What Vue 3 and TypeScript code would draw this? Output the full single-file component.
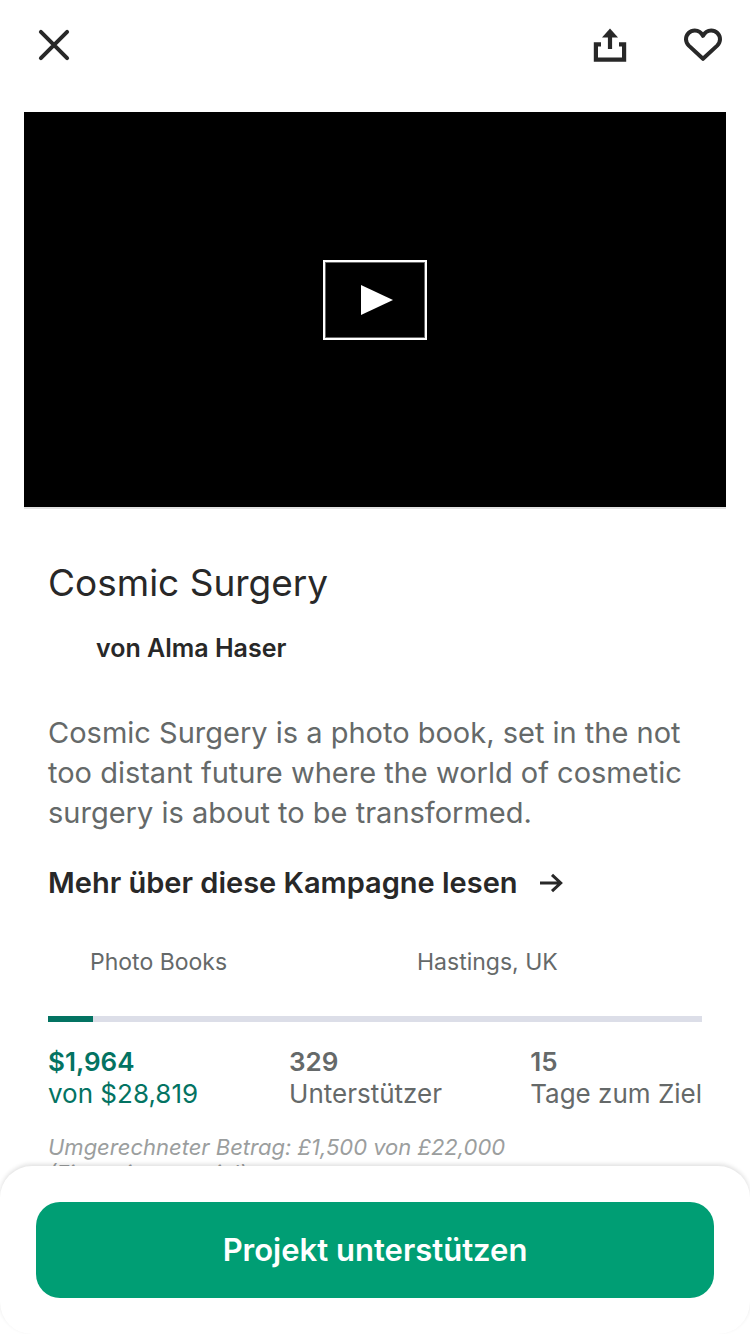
<script setup lang="ts">
interface Stat {
  value: string
  label: string
  highlight?: boolean
}

const title = 'Cosmic Surgery'
const fundedPercent = (1964 / 28819) * 100
const stats: Stat[] = [
  { value: '$1,964', label: 'von $28,819', highlight: true },
  { value: '329', label: 'Unterstützer' },
  { value: '15', label: 'Tage zum Ziel' },
]
</script>

<template>
  <div class="screen">
    <header class="toolbar">
      <button class="icon-button" type="button" aria-label="Schließen">
        <svg width="40" height="40" viewBox="0 0 40 40">
          <path d="M6.9 6.9 33.1 33.1M33.1 6.9 6.9 33.1" fill="none" stroke="currentColor" stroke-width="4" stroke-linecap="round" />
        </svg>
      </button>
      <div class="actions">
        <button class="icon-button" type="button" aria-label="Teilen">
          <svg width="40" height="40" viewBox="0 0 40 40">
            <path d="M11 19.3H5.9V34.6H34.1V19.3H29" fill="none" stroke="currentColor" stroke-width="4.2" />
            <path d="M20 24V10" fill="none" stroke="currentColor" stroke-width="4.2" />
            <path d="M20 3.5 28 12.4H12Z" fill="currentColor" />
          </svg>
        </button>
        <button class="icon-button" type="button" aria-label="Merken">
          <svg width="40" height="40" viewBox="0 0 40 40">
            <path d="M20 33.8 5.8 20.6C4 18.8 3 16.6 3 14.3 3 9.3 7 5.4 11.8 5.4 15.2 5.4 18.2 7.2 20 10.8 21.8 7.2 24.8 5.4 28.2 5.4 33 5.4 37 9.3 37 14.3 37 16.6 36 18.8 34.2 20.6Z" fill="none" stroke="currentColor" stroke-width="4" stroke-linejoin="round" />
          </svg>
        </button>
      </div>
    </header>

    <main class="content">
      <section class="video">
        <button class="play" type="button" aria-label="Video abspielen">
          <svg width="32" height="30" viewBox="0 0 32 30">
            <path d="M0 0 32 15 0 30Z" fill="currentColor" />
          </svg>
        </button>
      </section>

      <div class="details">
        <h1 class="title">{{ title }}</h1>
        <p class="author">von Alma Haser</p>
        <p class="blurb">
          Cosmic Surgery is a photo book, set in the not too distant future where the world of
          cosmetic surgery is about to be transformed.
        </p>
        <a class="more" href="#kampagne">
          <span>Mehr über diese Kampagne lesen</span>
          <svg width="24" height="20" viewBox="0 0 24 20" aria-hidden="true">
            <path d="M0 10H20.5M12 1.8 20.7 10 12 18.2" fill="none" stroke="currentColor" stroke-width="3" />
          </svg>
        </a>
        <div class="meta">
          <span>Photo Books</span>
          <span>Hastings, UK</span>
        </div>
        <div class="progress" role="progressbar" aria-label="Finanzierung" :aria-valuenow="fundedPercent" aria-valuemin="0" aria-valuemax="100">
          <div class="progress-fill" :style="{ width: fundedPercent + '%' }"></div>
        </div>
        <dl class="stats">
          <div v-for="stat in stats" :key="stat.label" class="stat" :class="{ highlight: stat.highlight }">
            <dt>{{ stat.value }}</dt>
            <dd>{{ stat.label }}</dd>
          </div>
        </dl>
        <p class="converted">Umgerechneter Betrag: £1,500 von £22,000 <br />(Finanzierungsziel).</p>
      </div>
    </main>

    <footer class="sheet">
      <button class="pledge" type="button">Projekt unterstützen</button>
    </footer>
  </div>
</template>

<style>
html,
body {
  margin: 0;
  background: #fff;
}
</style>

<style scoped>
.screen {
  position: relative;
  display: flex;
  flex-direction: column;
  height: 100vh;
  overflow: hidden;
  background: #fff;
  color: #282828;
  font-family: Inter, "Liberation Sans", sans-serif;
}
button {
  margin: 0;
  border: 0;
  padding: 0;
  background: none;
  color: inherit;
  font: inherit;
  cursor: pointer;
}
svg {
  display: block;
  flex: none;
}
p,
h1,
dl,
dd {
  margin: 0;
}
.toolbar {
  display: flex;
  flex: none;
  justify-content: space-between;
  padding: 25px 27px 23px 34px;
}
.icon-button {
  width: 40px;
  height: 40px;
}
.actions {
  display: flex;
  gap: 53px;
}
.content {
  flex: 1;
  min-height: 0;
  overflow-y: auto;
  scrollbar-width: none;
  padding: 24px 24px 0;
}
.video {
  display: flex;
  align-items: center;
  justify-content: center;
  box-sizing: border-box;
  aspect-ratio: 702 / 397;
  border-bottom: 2px solid #e3e3e3;
  padding-bottom: 20px;
  background: #000;
}
.play {
  display: flex;
  align-items: center;
  justify-content: center;
  box-sizing: border-box;
  width: 104px;
  height: 80px;
  border: 2px solid #fff;
  box-shadow: inset 0 0 0 1px #666;
  padding-left: 3px;
  color: #fff;
}
.details {
  padding: 50px 24px 190px;
}
.title {
  font-size: 37px;
  font-weight: 400;
  line-height: 48px;
}
.author {
  margin-top: 25px;
  padding-left: 48px;
  font-size: 25px;
  font-weight: 600;
  line-height: 32px;
}
.blurb {
  margin-top: 49px;
  color: #656969;
  font-size: 29px;
  line-height: 40px;
}
.more {
  display: flex;
  align-items: center;
  gap: 22px;
  margin-top: 30px;
  color: inherit;
  font-size: 29px;
  font-weight: 600;
  line-height: 40px;
  text-decoration: none;
}
.meta {
  display: grid;
  grid-template-columns: 1fr 1fr;
  margin-top: 44px;
  color: #656969;
  font-size: 23px;
  line-height: 30px;
}
.meta span {
  padding-left: 42px;
}
.progress {
  margin-top: 39px;
  height: 6px;
  background: #dcdee8;
}
.progress-fill {
  height: 100%;
  background: #037362;
}
.stats {
  display: grid;
  grid-template-columns: 1fr 1fr auto;
  margin-top: 24px;
  color: #656969;
  font-size: 26px;
  line-height: 32px;
}
.stat.highlight {
  color: #037362;
}
dt {
  font-weight: 600;
}
.converted {
  margin-top: 24px;
  color: #9b9e9e;
  font-size: 22px;
  font-style: italic;
  line-height: 26px;
}
.sheet {
  position: absolute;
  right: 0;
  bottom: 0;
  left: 0;
  border-radius: 32px;
  padding: 36px;
  background: #fff;
  box-shadow: 0 -2px 4px rgba(0, 0, 0, 0.12);
}
.pledge {
  display: block;
  width: 100%;
  border-radius: 24px;
  background: #009e74;
  color: #fff;
  font-size: 31px;
  font-weight: 600;
  line-height: 96px;
}
</style>
